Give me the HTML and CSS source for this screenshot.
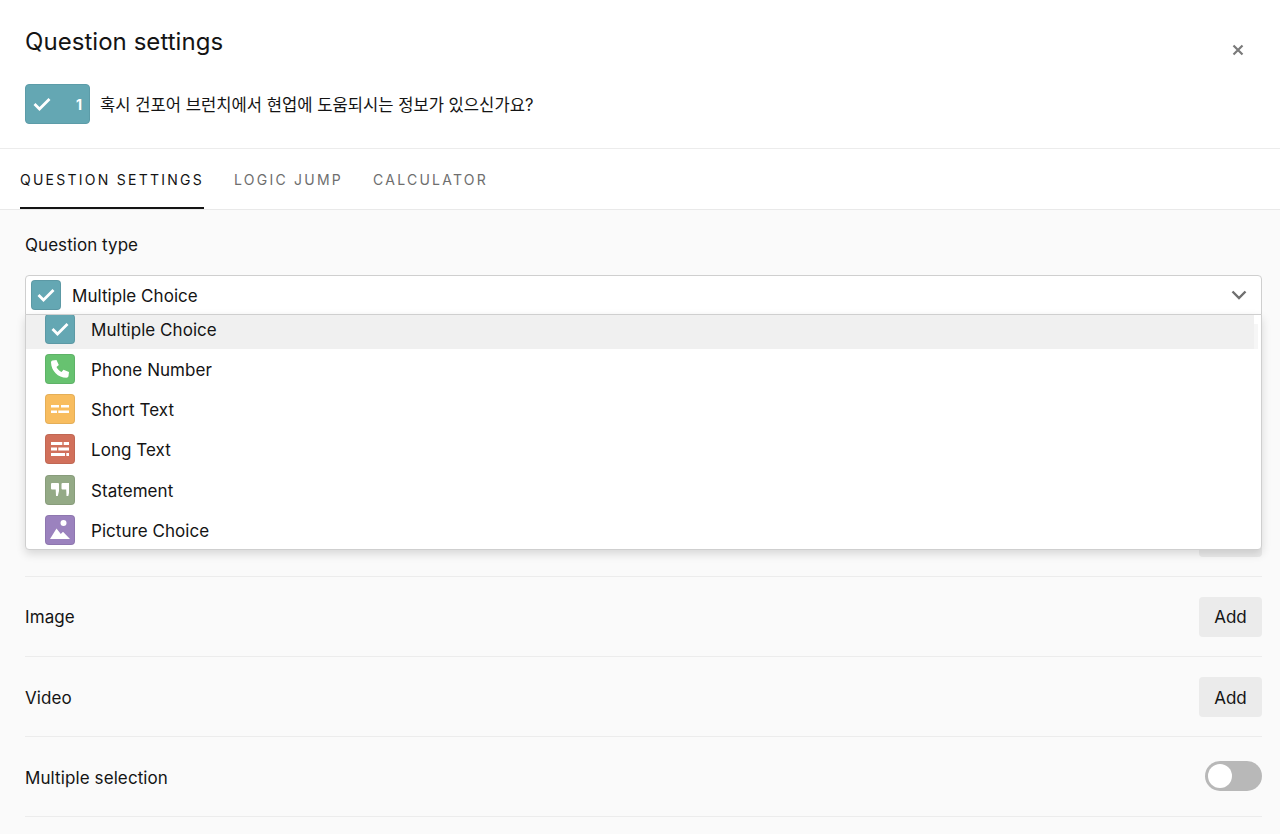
FILE: index.html
```html
<!DOCTYPE html>
<html lang="en">
<head>
<meta charset="utf-8">
<title>Question settings</title>
<link rel="stylesheet" href="styles.css">
</head>
<body>
<div class="dialog">
  <header class="head">
    <div class="title-row">
      <h1 class="title">Question settings</h1>
      <button class="close" aria-label="Close">
        <svg width="12" height="12" viewBox="0 0 12 12"><path d="M1.500 1.500l9 9M10.500 1.500l-9 9" stroke="#7a7a7a" stroke-width="2.200" fill="none"/></svg>
      </button>
    </div>
    <div class="question">
      <span class="badge">
        <svg width="18" height="14" viewBox="0 0 18 14"><path d="M1.500 7l5 5L16.500 2" stroke="#fff" stroke-width="2.800" fill="none"/></svg>
        <b class="num">1</b>
      </span>
      <span class="q-text">혹시 건포어 브런치에서 현업에 도움되시는 정보가 있으신가요?</span>
    </div>
  </header>
  <nav class="tabs">
    <a class="tab active">QUESTION SETTINGS</a>
    <a class="tab">LOGIC JUMP</a>
    <a class="tab">CALCULATOR</a>
  </nav>
  <main class="content">
    <div class="label">Question type</div>
    <div class="select-wrap">
      <div class="select">
        <span class="ico teal"><svg width="18" height="14" viewBox="0 0 18 14"><path d="M1.500 7l5 5L16.500 2" stroke="#fff" stroke-width="2.800" fill="none"/></svg></span>
        <span class="select-text txt">Multiple Choice</span>
        <svg class="chev" width="16" height="10" viewBox="0 0 16 10"><path d="M1.500 1.500L8 8l6.500-6.500" stroke="#6f6f6f" stroke-width="2.400" fill="none"/></svg>
      </div>
      <div class="menu">
        <ul class="list">
          <li class="item current">
            <span class="ico teal"><svg width="18" height="14" viewBox="0 0 18 14"><path d="M1.500 7l5 5L16.500 2" stroke="#fff" stroke-width="2.800" fill="none"/></svg></span>
            <span class="txt">Multiple Choice</span>
          </li>
          <li class="item">
            <span class="ico green"><svg width="20" height="20" viewBox="0 0 20 20"><path d="M2.500 1.500L6.500 1l2.300 5-2.300 2c1 2.200 2.500 3.800 5 5l2-2.300 5.500 2.300-.5 4c-.2 1-1 1.700-2 1.700C8 18.700 1.300 12 1 3.500c0-1 .5-1.800 1.500-2z" fill="#fff"/></svg></span>
            <span class="txt">Phone Number</span>
          </li>
          <li class="item">
            <span class="ico orange"><svg width="18" height="8" viewBox="0 0 18 8"><path d="M0 0h8v2.500H0zM10 0h8v2.500h-8zM0 5.500h6V8H0zM7.300 5.500H18V8H7.300z" fill="#fff"/></svg></span>
            <span class="txt">Short Text</span>
          </li>
          <li class="item">
            <span class="ico red"><svg width="18" height="14" viewBox="0 0 18 14"><path d="M0 0h11.300v3H0zM12.700 0H18v3h-5.300zM0 5.500h6v3H0zM7.300 5.500H18v3H7.300zM0 11h14v3H0zM15.300 11H18v3h-2.700z" fill="#fff"/></svg></span>
            <span class="txt">Long Text</span>
          </li>
          <li class="item">
            <span class="ico sage"><svg width="18.500" height="13" viewBox="0 0 18.500 13"><path d="M1 0h6a1 1 0 0 1 1 1v7l-1.200 5H5l-.300-6.500H1a1 1 0 0 1-1-1V1a1 1 0 0 1 1-1zM11.500 0h6a1 1 0 0 1 1 1v7l-1.200 5h-1.800l-.300-6.500h-3.700a1 1 0 0 1-1-1V1a1 1 0 0 1 1-1z" fill="#fff"/></svg></span>
            <span class="txt">Statement</span>
          </li>
          <li class="item">
            <span class="ico purple"><svg width="20" height="19" viewBox="0 0 20 19"><circle cx="13.500" cy="3" r="3" fill="#fff"/><path d="M0 19L6.500 8.500l4.300 5.500 2.200-2.300L20 19z" fill="#fff"/></svg></span>
            <span class="txt">Picture Choice</span>
          </li>
        </ul>
        <span class="scroll-thumb"></span>
      </div>
    </div>
    <section class="rows">
      <div class="row row-end"><button class="add">Add</button></div>
      <div class="row"><span class="txt">Image</span><button class="add">Add</button></div>
      <div class="row"><span class="txt">Video</span><button class="add">Add</button></div>
      <div class="row"><span class="txt">Multiple selection</span><span class="toggle"><span class="knob"></span></span></div>
    </section>
  </main>
</div>
</body>
</html>
```
FILE: styles.css
```css
* { box-sizing: border-box; }
html, body { margin: 0; height: 100%; overflow: hidden; }
body {
  font-family: Inter, "Noto Sans CJK KR", sans-serif;
  color: #141414;
  background: #fafafa;
}
.dialog { display: flex; flex-direction: column; height: 834px; }
.head {
  height: 149px;
  padding: 25px 36.500px 0 25px;
  background: #fff;
  border-bottom: 1px solid #ececec;
}
.title-row { display: flex; justify-content: space-between; align-items: flex-start; height: 59px; }
.title { margin: 0; font-size: 24px; line-height: 33px; font-weight: 400; letter-spacing: .05px; }
.close {
  width: 12px; height: 12px; margin: 18.500px 0 0 0; padding: 0;
  border: 0; background: none; display: flex;
}
.question { display: flex; align-items: center; gap: 10px; }
.badge {
  width: 65px; height: 40px;
  display: flex; align-items: center; justify-content: space-between;
  padding: 0 7px 0 7px;
  background: #64a7b3;
  border: 1px solid #5c9ca8;
  border-radius: 4px;
}
.num { color: #fff; font-size: 14px; font-weight: 700; }
.q-text { font-size: 16.600px; margin-top: -1px; }
.tabs {
  display: flex; gap: 30px;
  height: 61px;
  padding-left: 20px;
  background: #fff;
  border-bottom: 1px solid #e9e9e9;
}
.tab {
  height: 60px; line-height: 62px;
  font-size: 14px; letter-spacing: 2.250px;
  color: #6e6e6e;
}
.tab.active { color: #141414; border-bottom: 2px solid #141414; }
.content { padding: 0 18px 0 25px; flex: 1; }
.label { margin-top: 24px; font-size: 17px; line-height: 22px; letter-spacing: .05px; }
.select-wrap { position: relative; margin-top: 19px; }
.select {
  height: 40px;
  display: flex; align-items: center;
  padding: 0 14px 0 5px;
  background: #fff;
  border: 1px solid #cfcfcf;
  border-radius: 4px 4px 0 0;
  font-size: 17px;
  letter-spacing: .05px;
}
.txt { padding-top: 2px; }
.select-text { margin-left: 11px; flex: 1; }
.ico {
  width: 30px; height: 30px; flex: none;
  display: flex; align-items: center; justify-content: center;
  border-radius: 4px;
  border: 1px solid rgba(0, 0, 0, .08);
  overflow: hidden;
}
.teal { background: #64a7b3; }
.green { background: #67c270; }
.orange { background: #f8bd5f; }
.red { background: #d1705b; }
.sage { background: #94aa86; }
.purple { background: #9b82be; }
.menu {
  position: absolute; left: 0; right: 0; top: 39px; z-index: 2;
  height: 236px;
  overflow: hidden;
  background: #fff;
  border: 1px solid #cfcfcf;
  border-radius: 0 0 4px 4px;
  box-shadow: 0 4px 10px rgba(0, 0, 0, .14);
}
.list { list-style: none; margin: -6px 0 0; padding: 0; }
.item {
  height: 40.150px; width: 1228px;
  display: flex; align-items: center; gap: 16px;
  padding-left: 19px;
  font-size: 17px;
  letter-spacing: .05px;
}
.item.current { background: #f0f0f0; }
.scroll-thumb {
  position: absolute; right: 3px; top: 9px;
  width: 4px; height: 25px;
  background: #f6f6f6;
}
.rows { margin-top: 181.600px; }
.row {
  height: 80.200px;
  display: flex; align-items: center; justify-content: space-between;
  border-bottom: 1px solid #ececec;
  font-size: 17px;
  letter-spacing: .1px;
}
.row-end { justify-content: flex-end; }
.add {
  width: 63px; height: 40px;
  margin-top: 1px;
  padding: 1px 0 0;
  border: 0; border-radius: 4px;
  background: #ebebeb;
  color: #141414;
  font: inherit;
}
.toggle {
  width: 57px; height: 30px; padding: 3px;
  margin-bottom: 2px;
  background: #b8b8b8;
  border-radius: 15px;
  display: flex;
}
.knob { width: 24px; height: 24px; border-radius: 50%; background: #fff; }
```
